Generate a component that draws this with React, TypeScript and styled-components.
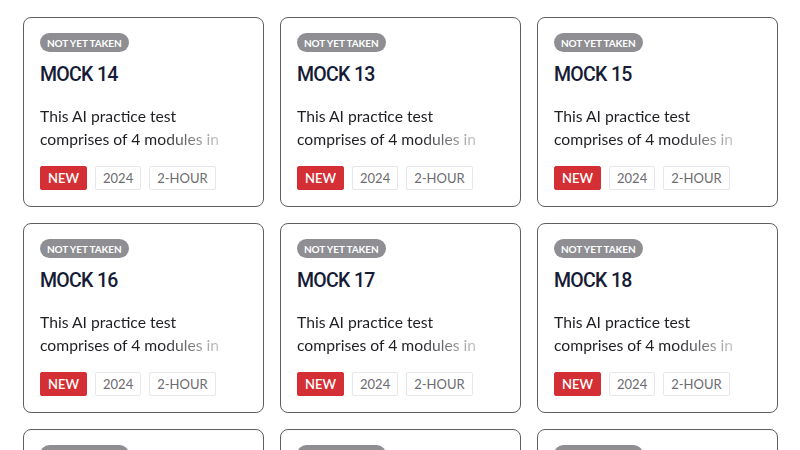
import React from "react";
import styled, { createGlobalStyle } from "styled-components";

const Global = createGlobalStyle`
  html, body { margin: 0; padding: 0; background: #ffffff; }
  body { font-family: "Lato", "Noto Sans", sans-serif; overflow: hidden; }
`;

const Page = styled.div`
  width: 800px;
  height: 450px;
  overflow: hidden;
  box-sizing: border-box;
  padding: 17px 22px 0 23px;
`;

const Grid = styled.div`
  display: grid;
  grid-template-columns: repeat(3, 241px);
  grid-auto-rows: 190px;
  column-gap: 16px;
  row-gap: 16px;
`;

const Card = styled.div`
  box-sizing: border-box;
  border: 1px solid #5f5f63;
  border-radius: 8px;
  padding: 15px 16px 16px 16px;
  display: flex;
  flex-direction: column;
  align-items: flex-start;
  background: #fff;
`;

const Status = styled.span`
  display: inline-flex;
  align-items: center;
  height: 19px;
  padding: 0 7px;
  border-radius: 10px;
  background: #8e8e93;
  color: #ffffff;
  font-size: 10px;
  font-weight: 700;
  letter-spacing: -0.1px;
  text-transform: uppercase;
`;

const Title = styled.h3`
  margin: 10px 0 0 0;
  font-family: "Roboto", "Lato", sans-serif;
  font-size: 19.5px;
  line-height: 26px;
  font-weight: 500;
  letter-spacing: -0.7px;
  color: #161b36;
`;

const Desc = styled.p`
  margin: 17px 0 0 0;
  font-size: 15.7px;
  line-height: 23px;
  color: #1f1f24;
  width: 192px;
  height: 46px;
  overflow: hidden;
  -webkit-mask-image: linear-gradient(to bottom, #000 50%, transparent 50%),
    linear-gradient(to right, #000 62%, rgba(0, 0, 0, 0.18) 96%);
  mask-image: linear-gradient(to bottom, #000 50%, transparent 50%),
    linear-gradient(to right, #000 62%, rgba(0, 0, 0, 0.18) 96%);
`;

const Tags = styled.div`
  display: flex;
  gap: 8px;
  margin-top: 15px;
`;

const Tag = styled.span<{ $accent?: boolean }>`
  display: inline-flex;
  align-items: center;
  box-sizing: border-box;
  height: 24px;
  padding: 0 7px;
  font-size: 13px;
  font-weight: ${(p) => (p.$accent ? 600 : 400)};
  color: ${(p) => (p.$accent ? "#ffffff" : "#6b6b70")};
  background: ${(p) => (p.$accent ? "#d32f34" : "#ffffff")};
  border: 1px solid ${(p) => (p.$accent ? "#d32f34" : "#e6e6ec")};
  border-radius: 2px;
`;

const mocks = ["MOCK 14", "MOCK 13", "MOCK 15", "MOCK 16", "MOCK 17", "MOCK 18", "MOCK 19", "MOCK 20", "MOCK 21"];

export default function App() {
  return (
    <>
      <Global />
      <Page>
        <Grid>
          {mocks.map((m) => (
            <Card key={m}>
              <Status>Not yet taken</Status>
              <Title>{m}</Title>
              <Desc>This AI practice test comprises of 4 modules in total</Desc>
              <Tags>
                <Tag $accent>NEW</Tag>
                <Tag>2024</Tag>
                <Tag>2-HOUR</Tag>
              </Tags>
            </Card>
          ))}
        </Grid>
      </Page>
    </>
  );
}
